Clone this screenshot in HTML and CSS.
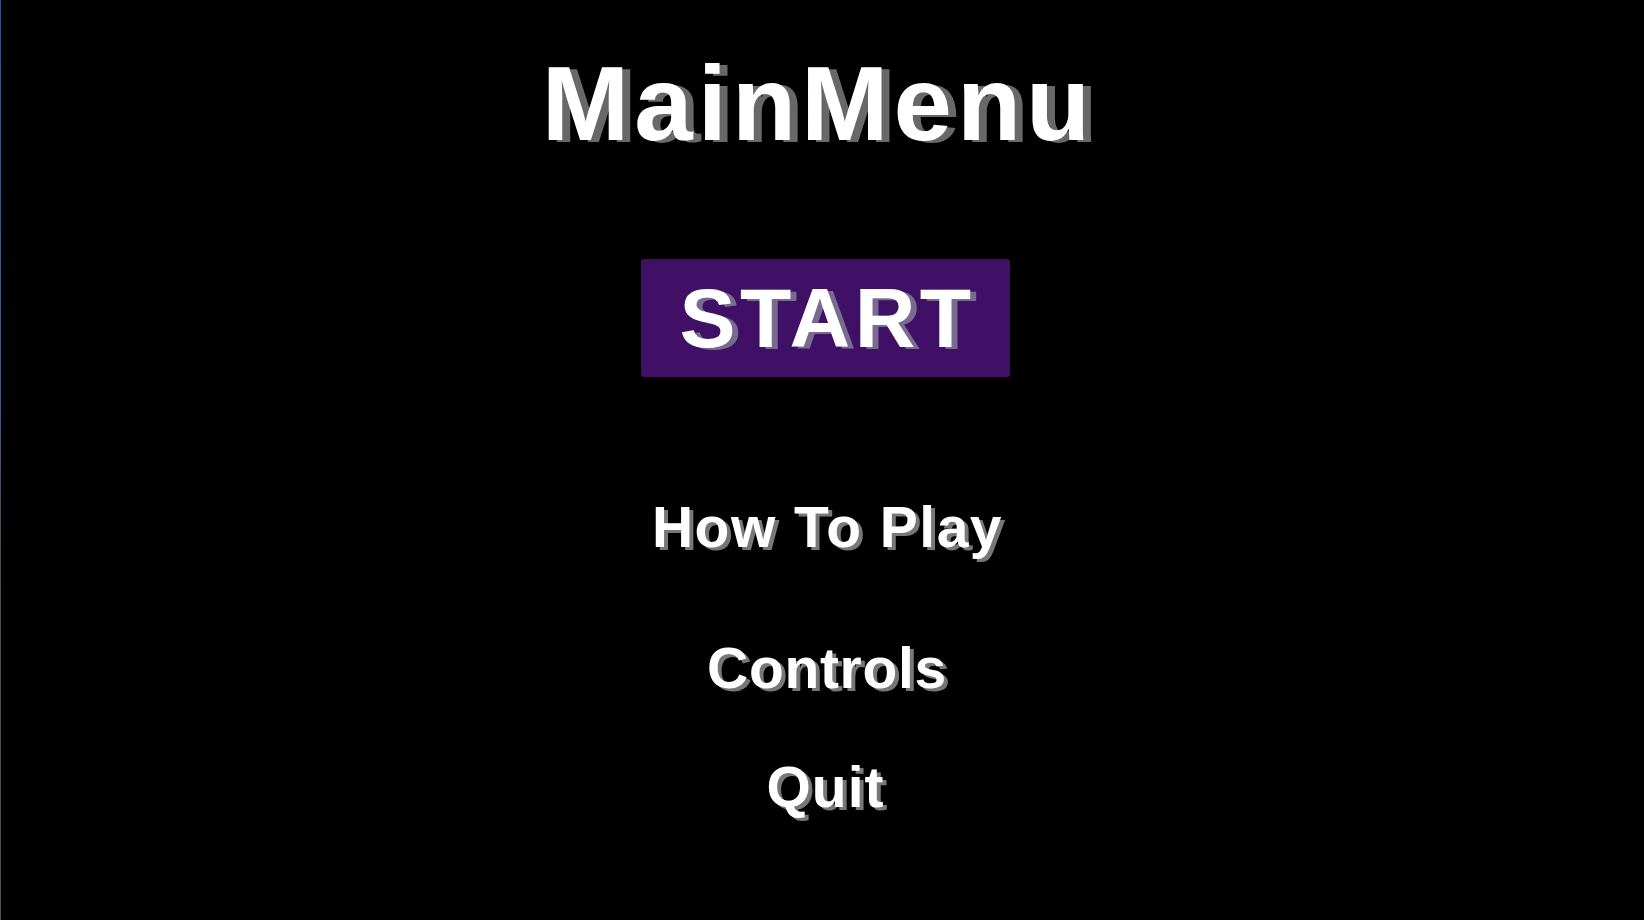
FILE: index.html
```html
<!DOCTYPE html>
<html lang="en">
<head>
<meta charset="utf-8">
<title>MainMenu</title>
<link rel="stylesheet" href="styles.css">
</head>
<body>
<div class="screen">
  <main class="menu">
    <h1 class="title">MainMenu</h1>
    <button class="start-btn" type="button">START</button>
    <nav class="options">
      <a class="option option-how">How To Play</a>
      <a class="option option-controls">Controls</a>
      <a class="option option-quit">Quit</a>
    </nav>
  </main>
</div>
</body>
</html>
```

FILE: styles.css
```css
html, body {
  margin: 0;
  padding: 0;
  height: 100%;
  background: #000;
}

.screen {
  height: 920px;
  width: 1644px;
  box-sizing: border-box;
  background: #000;
  border-left: 1px solid transparent;
  border-image: linear-gradient(to bottom, #3c4f86 0%, #44557e 45%, #4e4a4a 60%, #555050 100%) 1;
  overflow: hidden;
}

.menu {
  display: flex;
  flex-direction: column;
  align-items: center;
  padding-top: 51px;
  padding-left: 6px;
  font-family: "Liberation Sans", Arial, sans-serif;
  font-weight: 700;
  color: #fff;
}

.title {
  margin: 0 14px 0 0;
  font-size: 105px;
  line-height: 1;
  font-weight: 700;
  letter-spacing: 5px;
  text-shadow: 8px 2px 0 #686868;
}

.start-btn {
  margin-top: 103px;
  width: 369px;
  height: 118px;
  display: flex;
  align-items: center;
  justify-content: center;
  padding: 0 0 0 4px;
  border: none;
  border-radius: 3px;
  background: #3f1066;
  color: #fff;
  font-family: inherit;
  font-weight: 700;
  font-size: 84px;
  line-height: 1;
  letter-spacing: 4.5px;
  text-shadow: 6px 2px 0 #776b90;
  cursor: pointer;
}

.options {
  display: flex;
  flex-direction: column;
  align-items: center;
}

.option {
  font-size: 57px;
  line-height: 1;
  color: #fff;
  letter-spacing: 1px;
  text-shadow: 4px 3px 0 #777;
  cursor: pointer;
}

.option-how {
  margin-top: 122px;
  margin-left: 4px;
  letter-spacing: 1.5px;
}

.option-controls {
  margin-top: 84px;
  margin-left: 3px;
  letter-spacing: 0.7px;
}

.option-quit {
  margin-top: 62px;
}
```
